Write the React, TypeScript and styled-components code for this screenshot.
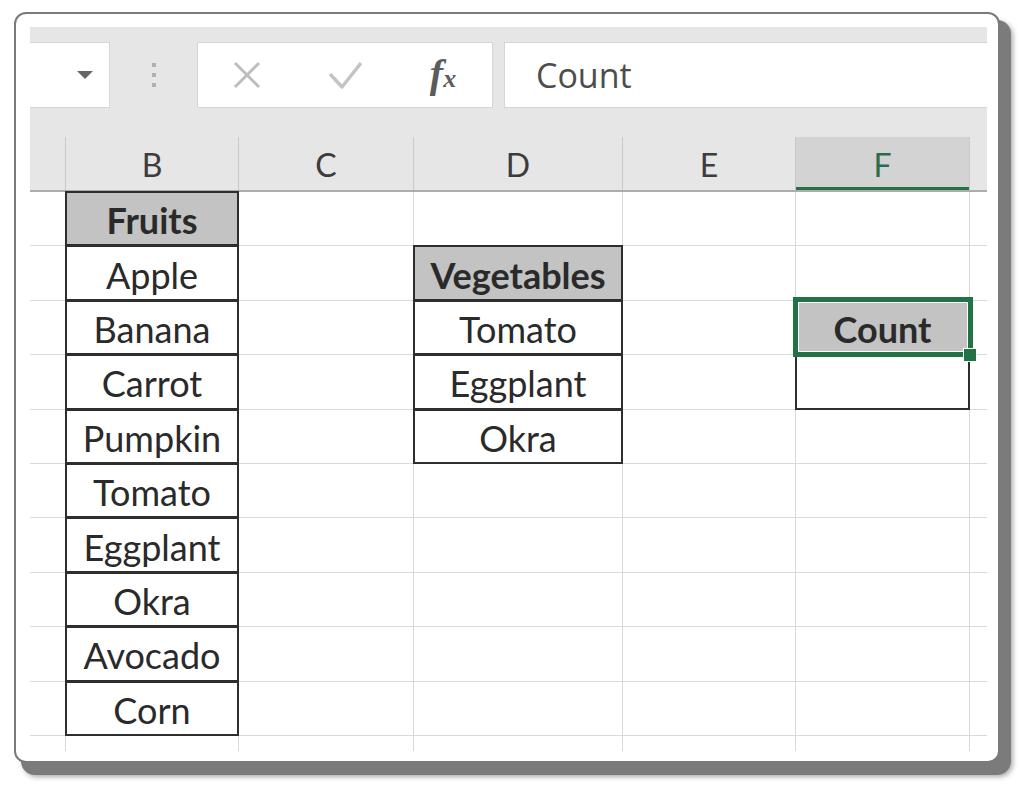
import React from "react";
import styled, { createGlobalStyle, css } from "styled-components";

const GlobalStyle = createGlobalStyle`
  body {
    margin: 0;
    background: #ffffff;
    font-family: Lato, "Liberation Sans", sans-serif;
  }
`;

const COLUMNS = "35px 172px 174px 208px 172px 173px 1fr";

const Page = styled.div`
  padding: 12px 0 30px 14px;
`;

const Frame = styled.div`
  box-sizing: border-box;
  width: 986px;
  height: 751px;
  border: 2px solid #7a7a7a;
  border-radius: 12px;
  box-shadow: 9px 10px 0 2px #7b7b7b, 11px 12px 5px 2px rgba(90, 90, 90, 0.5);
  background: #ffffff;
  padding: 13px 11px 0 14px;
`;

const Ribbon = styled.div`
  background: #e6e6e6;
`;

const FormulaBar = styled.div`
  display: flex;
  height: 66px;
  padding: 15px 0 29px;
`;

const NameBox = styled.div`
  box-sizing: border-box;
  width: 80px;
  background: #ffffff;
  border: 1px solid #d6d6d6;
  border-left: none;
  display: flex;
  align-items: center;
  justify-content: flex-end;
  padding-right: 15px;
`;

const Grip = styled.div`
  width: 87px;
  display: flex;
  flex-direction: column;
  align-items: center;
  justify-content: center;
  gap: 6px;
`;

const GripDot = styled.span`
  width: 4px;
  height: 4px;
  background: #b0b0b0;
`;

const ButtonBox = styled.div`
  box-sizing: border-box;
  width: 296px;
  background: #ffffff;
  border: 1px solid #d6d6d6;
  display: flex;
`;

const BarButton = styled.div`
  flex: 1;
  display: flex;
  align-items: center;
  justify-content: center;
`;

const Fx = styled.span`
  font-family: "Liberation Serif", serif;
  font-style: italic;
  font-weight: 700;
  color: #5c5c5c;
  font-size: 40px;
  line-height: 1;
  margin-top: -2px;

  small {
    font-size: 26px;
  }
`;

const FormulaInput = styled.div`
  flex: 1;
  margin-left: 11px;
  background: #ffffff;
  border: 1px solid #d6d6d6;
  border-right: none;
  display: flex;
  align-items: center;
  padding-left: 31px;
  font-family: "Open Sans", sans-serif;
  font-size: 34px;
  color: #4d4d4d;
`;

const HeaderRow = styled.div`
  display: grid;
  grid-template-columns: ${COLUMNS};
  column-gap: 1px;
  height: 53px;
  background: #c9c9c9;
  border-bottom: 2px solid #acacac;
`;

const HeaderCell = styled.div<{ $active?: boolean }>`
  display: flex;
  align-items: center;
  justify-content: center;
  padding-top: 2px;
  font-size: 32px;
  color: #3c3c3c;
  background: #e6e6e6;
  ${(p) =>
    p.$active &&
    css`
      background: #d3d3d3;
      color: #2d6c47;
      box-shadow: inset 0 -3px 0 #217346;
    `}
`;

const Sheet = styled.div`
  display: grid;
  grid-template-columns: ${COLUMNS};
  grid-template-rows: repeat(10, 53.4px) 15px;
  gap: 1px;
  background: #dadada;
`;

type CellKind = "blank" | "data" | "head";

const Cell = styled.div<{ $kind: CellKind; $selected?: boolean }>`
  box-sizing: border-box;
  display: flex;
  align-items: center;
  justify-content: center;
  padding-top: 3px;
  background: ${(p) => (p.$kind === "head" ? "#c3c3c3" : "#ffffff")};
  font-size: 36px;
  font-weight: ${(p) => (p.$kind === "head" ? 700 : 400)};
  color: #2a2a2a;
  white-space: nowrap;

  ${(p) =>
    p.$kind !== "blank" &&
    css`
      position: relative;
      &::after {
        content: "";
        position: absolute;
        inset: -1px;
        border: 2px solid #2e2e2e;
        pointer-events: none;
      }
    `}

  ${(p) =>
    p.$selected &&
    css`
      z-index: 2;
      &::after {
        inset: -4px -4px -3px -3px;
        border: 5px solid #217346;
        box-shadow: inset 0 0 0 1px #ffffff;
      }
      &::before {
        content: "";
        position: absolute;
        right: -8px;
        bottom: -8px;
        width: 12px;
        height: 12px;
        background: #217346;
        border: 1px solid #ffffff;
        z-index: 1;
      }
    `}
`;

type CellSpec = { text?: string; kind: CellKind; selected?: boolean };

const fruits = ["Apple", "Banana", "Carrot", "Pumpkin", "Tomato", "Eggplant", "Okra", "Avocado", "Corn"];
const vegetables = ["Tomato", "Eggplant", "Okra"];
const headers = ["", "B", "C", "D", "E", "F", ""];

const cellAt = (row: number, col: number): CellSpec => {
  if (col === 1) {
    if (row === 0) return { text: "Fruits", kind: "head" };
    if (row <= fruits.length) return { text: fruits[row - 1], kind: "data" };
  }
  if (col === 3) {
    if (row === 1) return { text: "Vegetables", kind: "head" };
    if (row >= 2 && row < 2 + vegetables.length) return { text: vegetables[row - 2], kind: "data" };
  }
  if (col === 5) {
    if (row === 2) return { text: "Count", kind: "head", selected: true };
    if (row === 3) return { text: "", kind: "data" };
  }
  return { kind: "blank" };
};

const DropArrow = () => (
  <svg width="18" height="10" viewBox="0 0 18 10">
    <polygon points="1,1 17,1 9,9" fill="#666666" />
  </svg>
);

const CancelIcon = () => (
  <svg width="30" height="28" viewBox="0 0 30 28">
    <path d="M3 2 L27 26 M27 2 L3 26" stroke="#bdbdbd" strokeWidth="3" fill="none" />
  </svg>
);

const EnterIcon = () => (
  <svg width="34" height="30" viewBox="0 0 34 30">
    <path d="M2 14 L14 27 L33 3" stroke="#c4c4c4" strokeWidth="3.5" fill="none" strokeLinejoin="round" />
  </svg>
);

const App = () => {
  const rows = Array.from({ length: 11 }, (_, r) => r);
  const cols = Array.from({ length: 7 }, (_, c) => c);

  return (
    <Page>
      <GlobalStyle />
      <Frame>
        <Ribbon>
          <FormulaBar>
            <NameBox>
              <DropArrow />
            </NameBox>
            <Grip>
              <GripDot />
              <GripDot />
              <GripDot />
            </Grip>
            <ButtonBox>
              <BarButton>
                <CancelIcon />
              </BarButton>
              <BarButton>
                <EnterIcon />
              </BarButton>
              <BarButton>
                <Fx>
                  f<small>x</small>
                </Fx>
              </BarButton>
            </ButtonBox>
            <FormulaInput>Count</FormulaInput>
          </FormulaBar>
          <HeaderRow>
            {headers.map((label, i) => (
              <HeaderCell key={i} $active={label === "F"}>
                {label}
              </HeaderCell>
            ))}
          </HeaderRow>
        </Ribbon>
        <Sheet>
          {rows.map((r) =>
            cols.map((c) => {
              const spec = cellAt(r, c);
              return (
                <Cell key={`${r}-${c}`} $kind={spec.kind} $selected={spec.selected}>
                  {spec.text}
                </Cell>
              );
            })
          )}
        </Sheet>
      </Frame>
    </Page>
  );
};

export default App;
